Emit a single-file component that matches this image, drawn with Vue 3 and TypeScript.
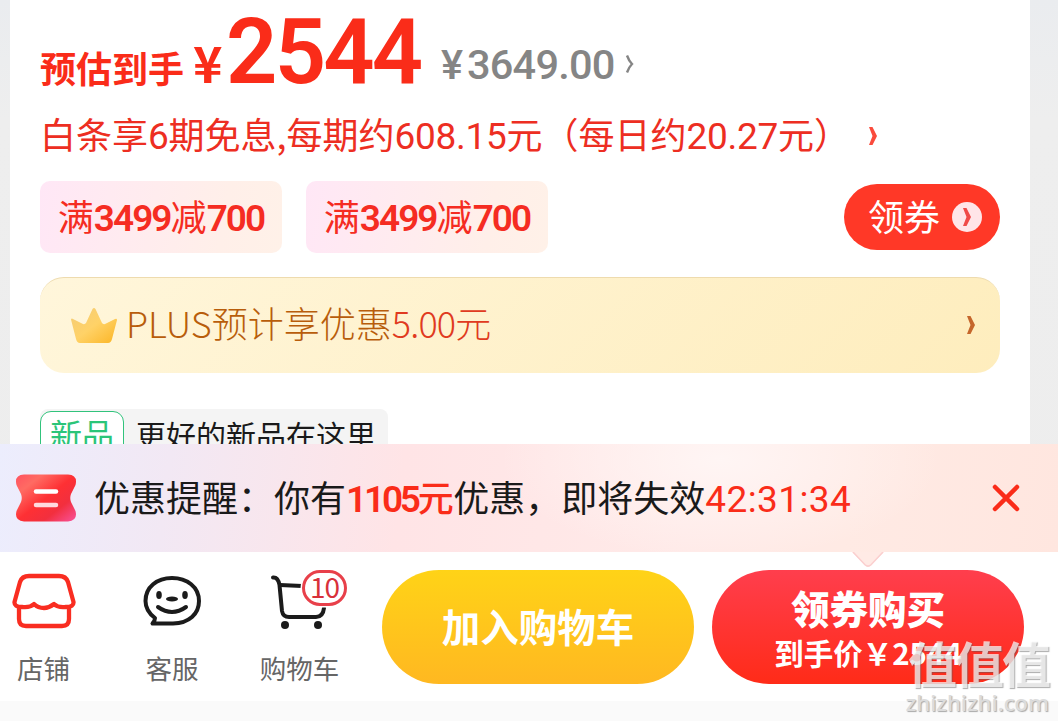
<script setup lang="ts">
	import { ref } from 'vue'

	const coupons = ref([
		{ full: 3499, minus: 700 },
		{ full: 3499, minus: 700 }
	])
	const cartCount = ref(10)
	const finalPrice = ref(2544)
	const countdown = ref('42:31:34')
</script>

<template>
	<div class="page">
		<main class="card">
			<div class="price-row">
				<span class="label">预估到手</span>
				<span class="yen">¥</span>
				<span class="price">{{ finalPrice }}</span>
				<span class="origin-yen">¥</span>
				<span class="origin">3649.00</span>
				<svg class="price-arrow" width="10" height="20" viewBox="0 0 10 20">
					<path d="M2 1.500Q4 7 7 10Q4 13 2 18.500" fill="none" stroke="#858585" stroke-width="2.400" />
				</svg>
			</div>

			<div class="credit-row">
				<span>白条享<b class="n">6</b>期免息,每期约<b class="n">608.15</b>元</span>
				<span class="daily">（每日约<b class="n">20.27</b>元）</span>
				<svg class="credit-arrow" width="10" height="20" viewBox="0 0 10 20">
					<path d="M1 1h3.500L9 10 4.500 19H1l3.500-9z" fill="#fa4b3c" />
				</svg>
			</div>

			<div class="coupon-row">
				<div v-for="(c, i) in coupons" :key="i" class="coupon">
					满<b>{{ c.full }}</b>减<b>{{ c.minus }}</b>
				</div>
				<button class="get">
					<span>领券</span>
					<svg width="30" height="30" viewBox="0 0 30 30">
						<circle cx="15" cy="15" r="15" fill="#ffe5e8" />
						<path d="M11 6h3.500L19 15l-4.500 9H11l3.500-9z" fill="#f04a48" />
					</svg>
				</button>
			</div>

			<div class="plus">
				<svg class="crown" width="48" height="38" viewBox="0 0 48 38">
					<defs>
						<linearGradient id="gold" x1="0" y1="0" x2="1" y2="1">
							<stop offset="0" stop-color="#f3cb78" />
							<stop offset=".5" stop-color="#ffd267" />
							<stop offset="1" stop-color="#fbb525" />
						</linearGradient>
					</defs>
					<path d="M1 13.500Q1.500 12 3 13L13 18Q15 18.500 16 17L22.500 3Q24 1 25.500 3L32 17Q33 18.500 35 18L45 13Q47 12 47 14L42 33Q41 37 38 37H10Q7 37 6 33Z" fill="url(#gold)" />
				</svg>
				<span class="plus-text">PLUS预计享优惠<em>5.00元</em></span>
				<svg class="plus-arrow" width="10" height="20" viewBox="0 0 10 20">
					<path d="M1 1h3.500L9 10 4.500 19H1l3.500-9z" fill="#c5662b" />
				</svg>
			</div>

			<div class="fresh">
				<span class="tag">新品</span>
				<span class="fresh-text">更好的新品在这里</span>
			</div>
		</main>

		<section class="notice">
			<svg class="ticket" width="60" height="48" viewBox="0 0 60 48">
				<defs>
					<linearGradient id="ticket" x1="0" y1="0" x2="1" y2="1">
						<stop offset="0" stop-color="#ff5260" />
						<stop offset=".22" stop-color="#ff6b63" />
						<stop offset=".5" stop-color="#fe3034" />
						<stop offset=".72" stop-color="#f22f3e" />
						<stop offset="1" stop-color="#f9529b" />
					</linearGradient>
				</defs>
				<path d="M8 .5H52Q62 1 59.500 11L55 20Q53.500 24 55 28L59.500 37Q62 47 52 47.500H8Q-2 47 .5 37L5 28Q6.500 24 5 20L.5 11Q-2 1 8 .5Z" fill="url(#ticket)" />
				<path d="M20 17.500H40" stroke="#fff" stroke-width="4.500" stroke-linecap="round" />
				<path d="M20 31H40" stroke="#ffd9de" stroke-width="4.500" stroke-linecap="round" />
			</svg>
			<span class="notice-text">优惠提醒：<span>你有</span><b><i>1105</i>元</b>优惠<span class="comma">，</span>即将失效<span class="time">{{ countdown }}</span></span>
			<svg class="close" width="28" height="28" viewBox="0 0 28 28">
				<path d="M3 3 25 25M25 3 3 25" stroke="#fa2c19" stroke-width="4.500" stroke-linecap="round" />
			</svg>
			<svg class="pointer" width="32" height="16" viewBox="0 0 32 16">
				<path d="M0 0H32L19 13.500Q16 16 13 13.500Z" fill="#ffeae5" />
				<path d="M1 0 13 12.700Q16 15.500 19 12.700L31 0" fill="none" stroke="#fbcfcf" stroke-width="1.500" />
			</svg>
		</section>

		<footer class="bar">
			<div class="item">
				<svg width="64" height="56" viewBox="0 0 64 56" fill="none" stroke="#f92d21" stroke-width="4.300" stroke-linejoin="round">
					<path d="M17 3H47Q54 3 56 9L61.500 29Q62 34 54 34Q46 35 42 31Q37 35 32 35Q26 35 22 31Q18 35 10 34Q2 34 2.500 29L8 9Q10 3 17 3Z" />
					<path d="M7 34V46Q7 53 14 53H50Q57 53 57 46V34" />
				</svg>
				<span>店铺</span>
			</div>
			<div class="item">
				<svg width="64" height="56" viewBox="0 0 64 56" fill="none" stroke="#1b1b1b" stroke-width="4">
					<path d="M32 5C17 5 5.500 14 5.500 28Q5.500 38 15 45Q15 48 12.500 50.500H33C49 50 59 41 59 28C59 14 47 5 32 5Z" stroke-linejoin="round" />
					<path d="M18 34Q32 44 46 34" stroke-linecap="round" />
					<g fill="#1b1b1b" stroke="none">
						<ellipse cx="19" cy="22" rx="2.800" ry="4" />
						<ellipse cx="45" cy="22" rx="2.800" ry="4" />
						<ellipse cx="32" cy="26" rx="6" ry="2.600" />
					</g>
				</svg>
				<span>客服</span>
			</div>
			<div class="item">
				<svg width="64" height="56" viewBox="0 0 64 56" fill="none" stroke="#1b1b1b" stroke-width="4" stroke-linecap="round">
					<path d="M5 4.500Q10 4 11.500 12L14 38Q15 44 21 44H48Q55 44 56 35" />
					<path d="M12 12 34 13" />
					<g fill="#1b1b1b" stroke="none">
						<circle cx="17" cy="52" r="4" />
						<circle cx="50" cy="52" r="4" />
					</g>
				</svg>
				<i class="badge">{{ cartCount }}</i>
				<span>购物车</span>
			</div>
			<button class="btn add">加入购物车</button>
			<button class="btn buy">
				<strong>领券购买</strong>
				<span>到手价<i>￥</i>{{ finalPrice }}</span>
			</button>
		</footer>

		<div class="watermark">
			<span class="mark">值值值</span>
			<span class="site">zhizhizhi.com</span>
		</div>
	</div>
</template>

<style>
	body {
		margin: 0;
		overflow: hidden;
	}
</style>

<style scoped>
	.page {
		position: relative;
		display: flex;
		flex-direction: column;
		width: 1058px;
		height: 721px;
		overflow: hidden;
		background: linear-gradient(#eaecef, #eee 120px, #ededed);
		font-family: 'Noto Sans CJK SC', sans-serif;
		white-space: nowrap;
	}

	button {
		border: 0;
		padding: 0;
		font-family: inherit;
	}

	i, em {
		font-style: normal;
	}

	svg {
		display: block;
		flex: none;
	}

	.card {
		box-sizing: border-box;
		display: flex;
		flex-direction: column;
		flex: none;
		width: 1020px;
		height: 444px;
		margin-left: 10px;
		padding: 0 30px;
		background: #fff;
		overflow: hidden;
	}

	.price-row {
		display: flex;
		align-items: baseline;
		flex: none;
		height: 109px;
		line-height: 104px;
		color: #fa2c19;

		.label {
			font-size: 36px;
			font-weight: 700;
		}

		.yen {
			width: 33px;
			margin-left: 9px;
			font: 600 50px/104px 'Noto Sans CJK SC', sans-serif;
		}

		.price {
			width: 215px;
			font: 600 90px/106px Roboto, sans-serif;
			letter-spacing: -2.800px;
		}

		.origin-yen, .origin {
			position: relative;
			top: -4px;
			color: #858585;
			font: 500 41.500px/98px Roboto, sans-serif;
			letter-spacing: -.8px;
		}

		.origin-yen {
			width: 26px;
		}

		.price-arrow {
			align-self: flex-start;
			margin: 54px 0 0 11px;
		}
	}

	.credit-row {
		display: flex;
		align-items: center;
		flex: none;
		height: 52px;
		color: #ed2e22;
		font-size: 36px;
		line-height: 52px;

		> span {
			margin-top: -4px;
		}

		.n {
			font: 400 37px/1 Roboto, sans-serif;
			letter-spacing: -.3px;
		}

		.credit-arrow {
			margin: 2px 0 0 18px;
		}
	}

	.coupon-row {
		display: flex;
		align-items: center;
		flex: none;
		height: 72px;
		margin-top: 20px;

		.coupon {
			width: 242px;
			height: 72px;
			margin-right: 24px;
			border-radius: 10px;
			background: linear-gradient(100deg, #ffe7f6, #ffefe9 75%, #fff1e8);
			color: #f52c22;
			font-size: 36px;
			line-height: 68px;
			text-align: center;

			b {
				font: 600 37px/1 Roboto, sans-serif;
				letter-spacing: -1.900px;
			}
		}

		.get {
			display: flex;
			align-items: center;
			gap: 12px;
			width: 156px;
			height: 66px;
			margin-left: auto;
			padding-left: 24px;
			border-radius: 33px;
			background: #ff3827;
			color: #fff;
			font-size: 36px;
			line-height: 60px;

			span {
				margin-top: -5px;
			}
		}
	}

	.plus {
		box-sizing: border-box;
		display: flex;
		align-items: center;
		flex: none;
		height: 96px;
		margin-top: 24px;
		padding: 0 24px 0 30px;
		border-top: 1px solid #eedbae;
		border-radius: 24px;
		background: linear-gradient(135deg, #fff6db, #feedbd);
		color: #b85d0b;

		.crown {
			margin-top: -2px;
		}

		.plus-text {
			flex: 1;
			margin: -8px 0 0 8px;
			font-size: 36px;
			font-weight: 300;
			letter-spacing: 0;
		}

		.plus-arrow {
			margin-top: -2px;
		}

		em {
			color: #e03a20;
			letter-spacing: -.8px;
		}
	}

	.fresh {
		display: flex;
		flex: none;
		width: 348px;
		height: 54px;
		margin-top: 36px;
		border-radius: 8px;
		background: #f4f4f4;

		.tag {
			box-sizing: border-box;
			width: 84px;
			height: 54px;
			margin-top: 2px;
			border: 1.500px solid #31c37c;
			border-radius: 11px;
			background: #fff;
			color: #2bc579;
			font-size: 32px;
			line-height: 42px;
			text-align: center;
		}

		.fresh-text {
			margin-left: 12px;
			color: #1a1a1a;
			font-size: 30px;
			line-height: 50px;
		}
	}

	.notice {
		position: relative;
		display: flex;
		align-items: center;
		flex: none;
		height: 108px;
		background:
			radial-gradient(ellipse 220px 100px at 720px 15px, rgba(255, 246, 245, .95), transparent),
			linear-gradient(97deg, #ecedfd, #f2e8f4 16%, #ffe4e6 38%, #ffeae8 65%, #ffeae4 80%, #ffe6df);

		.ticket {
			margin-left: 16px;
		}

		.notice-text {
			flex: 1;
			margin: 0 0 4px 18px;
			color: #1a1a1a;
			font-size: 36px;

			b {
				color: #fa2c19;
				font-weight: 500;
				letter-spacing: -.5px;
			}

			i {
				font: 600 37px Roboto, sans-serif;
				letter-spacing: -3.200px;
			}
		}

		.time {
			color: #fa2c19;
			font: 400 37px Roboto, sans-serif;
			letter-spacing: .4px;
		}

		.close {
			margin: 0 38px 0 0;
		}

		.pointer {
			position: absolute;
			top: 108px;
			left: 852px;
			z-index: 1;
		}
	}

	.bar {
		display: flex;
		flex: 1;
		background: linear-gradient(#fff 149px, #fafafa 149px);

		.item {
			position: relative;
			display: flex;
			flex-direction: column;
			align-items: center;
			width: 128px;
			padding-top: 21px;
			color: #666;
			font-size: 26.500px;
			line-height: 38px;
		}

		.item:first-child {
			width: 87px;
			margin-right: 21px;
		}

		.item > span {
			margin-top: 20px;
		}

		.item:nth-child(3) {
			width: 127px;
		}

		.badge {
			position: absolute;
			box-sizing: border-box;
			top: 18px;
			left: 66px;
			width: 45px;
			height: 36px;
			border: 3px solid #e8404a;
			border-radius: 18px;
			background: #fff;
			box-shadow: 0 0 0 1.500px #fff;
			color: #d8303a;
			font-size: 28px;
			line-height: 27px;
			text-align: center;
			letter-spacing: -1px;
		}
	}

	.btn {
		display: flex;
		flex-direction: column;
		align-items: center;
		width: 312px;
		height: 114px;
		margin-top: 18px;
		border-radius: 57px;
		color: #fff;
		font-weight: 700;
	}

	.add {
		margin-left: 19px;
		background: linear-gradient(#ffd317, #ffb821);
		font-size: 38.500px;
		line-height: 111px;
	}

	.buy {
		margin-left: 18px;
		background: linear-gradient(#ff3e4d, #ff2b18);

		strong {
			margin-top: 12px;
			font-size: 38.500px;
			line-height: 50px;
		}

		span {
			font-size: 29.500px;
			font-weight: 600;
			line-height: 40px;
		}
	}

	.watermark {
		position: absolute;
		right: 9px;
		bottom: 6px;
		display: flex;
		flex-direction: column;
		align-items: flex-end;
		color: rgba(255, 255, 255, .7);
		text-shadow: 1px 1px 1px rgba(90, 90, 90, .5);
		z-index: 2;

		.mark {
			margin-bottom: 2px;
			font-size: 49px;
			font-weight: 700;
			line-height: 50px;
			letter-spacing: -2px;
		}

		.site {
			color: #dcdcdc;
			font: 600 22px/26px 'Open Sans', sans-serif;
		}
	}
</style>
